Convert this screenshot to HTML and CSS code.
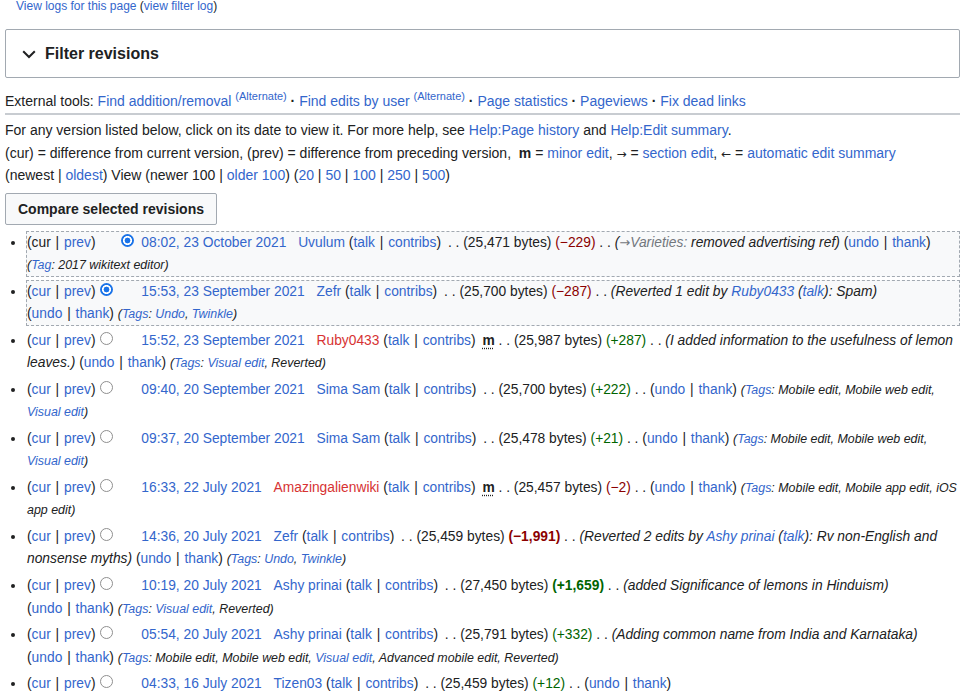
FILE: index.html
```html
<!DOCTYPE html>
<html lang="en">
<head>
<meta charset="utf-8">
<title>Lemon: Revision history</title>
<link rel="stylesheet" href="styles.css">
</head>
<body>
<div class="page">
  <div class="logs"><a href="#">View logs for this page</a> (<a href="#">view filter log</a>)</div>

  <div class="filter">
    <svg class="chev" width="14" height="9" viewBox="0 0 14 9"><polyline points="1.2,1.2 7,7 12.8,1.2" fill="none" stroke="#202122" stroke-width="2"/></svg>
    <span class="filter-title">Filter revisions</span>
  </div>

  <div class="ext">External tools: <a href="#">Find addition/removal</a> <sup><a href="#">(Alternate)</a></sup> <b class="dot">·</b> <a href="#">Find edits by user</a> <sup><a href="#">(Alternate)</a></sup> <b class="dot">·</b> <a href="#">Page statistics</a> <b class="dot">·</b> <a href="#">Pageviews</a> <b class="dot">·</b> <a href="#">Fix dead links</a></div>

  <div class="intro">
    <p>For any version listed below, click on its date to view it. For more help, see <a href="#">Help:Page history</a> and <a href="#">Help:Edit summary</a>.</p>
    <p>(cur) = difference from current version, (prev) = difference from preceding version, &nbsp;<abbr class="minor">m</abbr> = <a href="#">minor edit</a>, <span class="arrow">→</span> = <a href="#">section edit</a>, <span class="arrow">←</span> = <a href="#">automatic edit summary</a></p>
    <p>(newest | <a href="#">oldest</a>) View (newer 100 | <a href="#">older 100</a>) (<a href="#">20</a> | <a href="#">50</a> | <a href="#">100</a> | <a href="#">250</a> | <a href="#">500</a>)</p>
  </div>

  <button class="compare" type="button">Compare selected revisions</button>

  <ul class="history">
    <li class="selected"><span class="hl">(<span>cur</span><span><a href="#">prev</a></span>)</span><span class="radio off"></span><span class="radio checked"></span> <a class="date" href="#">08:02, 23 October 2021</a> <span class="user"><a href="#">Uvulum</a> <span class="hl">(<span><a href="#">talk</a></span><span><a href="#">contribs</a></span>)</span></span> . . <span class="bytes">(25,471 bytes)</span> <span class="neg">(−229)</span> . . <span class="comment">(<span class="auto"><a class="arrow" href="#">→</a>Varieties:</span> removed advertising ref)</span> <span class="hl">(<span><a href="#">undo</a></span><span><a href="#">thank</a></span>)</span> <span class="tags">(<a href="#">Tag</a>: 2017 wikitext editor)</span></li>

    <li class="selected"><span class="hl">(<span><a href="#">cur</a></span><span><a href="#">prev</a></span>)</span><span class="radio checked"></span><span class="radio off"></span> <a class="date" href="#">15:53, 23 September 2021</a> <span class="user"><a href="#">Zefr</a> <span class="hl">(<span><a href="#">talk</a></span><span><a href="#">contribs</a></span>)</span></span> . . <span class="bytes">(25,700 bytes)</span> <span class="neg">(−287)</span> . . <span class="comment">(Reverted 1 edit by <a href="#">Ruby0433</a> (<a href="#">talk</a>): Spam)</span> <span class="hl">(<span><a href="#">undo</a></span><span><a href="#">thank</a></span>)</span> <span class="tags">(<a href="#">Tags</a>: <a href="#">Undo</a>, <a href="#">Twinkle</a>)</span></li>

    <li><span class="hl">(<span><a href="#">cur</a></span><span><a href="#">prev</a></span>)</span><span class="radio"></span><span class="radio off"></span> <a class="date" href="#">15:52, 23 September 2021</a> <span class="user"><a class="new" href="#">Ruby0433</a> <span class="hl">(<span><a href="#">talk</a></span><span><a href="#">contribs</a></span>)</span></span> <abbr class="minor">m</abbr> . . <span class="bytes">(25,987 bytes)</span> <span class="pos">(+287)</span> . . <span class="comment">(I added information to the usefulness of lemon leaves.)</span> <span class="hl">(<span><a href="#">undo</a></span><span><a href="#">thank</a></span>)</span> <span class="tags">(<a href="#">Tags</a>: <a href="#">Visual edit</a>, Reverted)</span></li>

    <li><span class="hl">(<span><a href="#">cur</a></span><span><a href="#">prev</a></span>)</span><span class="radio"></span><span class="radio off"></span> <a class="date" href="#">09:40, 20 September 2021</a> <span class="user"><a href="#">Sima Sam</a> <span class="hl">(<span><a href="#">talk</a></span><span><a href="#">contribs</a></span>)</span></span> . . <span class="bytes">(25,700 bytes)</span> <span class="pos">(+222)</span> . . <span class="hl">(<span><a href="#">undo</a></span><span><a href="#">thank</a></span>)</span> <span class="tags">(<a href="#">Tags</a>: Mobile edit, Mobile web edit, <a href="#">Visual edit</a>)</span></li>

    <li><span class="hl">(<span><a href="#">cur</a></span><span><a href="#">prev</a></span>)</span><span class="radio"></span><span class="radio off"></span> <a class="date" href="#">09:37, 20 September 2021</a> <span class="user"><a href="#">Sima Sam</a> <span class="hl">(<span><a href="#">talk</a></span><span><a href="#">contribs</a></span>)</span></span> . . <span class="bytes">(25,478 bytes)</span> <span class="pos">(+21)</span> . . <span class="hl">(<span><a href="#">undo</a></span><span><a href="#">thank</a></span>)</span> <span class="tags">(<a href="#">Tags</a>: Mobile edit, Mobile web edit, <a href="#">Visual edit</a>)</span></li>

    <li><span class="hl">(<span><a href="#">cur</a></span><span><a href="#">prev</a></span>)</span><span class="radio"></span><span class="radio off"></span> <a class="date" href="#">16:33, 22 July 2021</a> <span class="user"><a class="new" href="#">Amazingalienwiki</a> <span class="hl">(<span><a href="#">talk</a></span><span><a href="#">contribs</a></span>)</span></span> <abbr class="minor">m</abbr> . . <span class="bytes">(25,457 bytes)</span> <span class="neg">(−2)</span> . . <span class="hl">(<span><a href="#">undo</a></span><span><a href="#">thank</a></span>)</span> <span class="tags">(<a href="#">Tags</a>: Mobile edit, Mobile app edit, iOS app edit)</span></li>

    <li><span class="hl">(<span><a href="#">cur</a></span><span><a href="#">prev</a></span>)</span><span class="radio"></span><span class="radio off"></span> <a class="date" href="#">14:36, 20 July 2021</a> <span class="user"><a href="#">Zefr</a> <span class="hl">(<span><a href="#">talk</a></span><span><a href="#">contribs</a></span>)</span></span> . . <span class="bytes">(25,459 bytes)</span> <strong class="neg">(−1,991)</strong> . . <span class="comment">(Reverted 2 edits by <a href="#">Ashy prinai</a> (<a href="#">talk</a>): Rv non-English and nonsense myths)</span> <span class="hl">(<span><a href="#">undo</a></span><span><a href="#">thank</a></span>)</span> <span class="tags">(<a href="#">Tags</a>: <a href="#">Undo</a>, <a href="#">Twinkle</a>)</span></li>

    <li><span class="hl">(<span><a href="#">cur</a></span><span><a href="#">prev</a></span>)</span><span class="radio"></span><span class="radio off"></span> <a class="date" href="#">10:19, 20 July 2021</a> <span class="user"><a href="#">Ashy prinai</a> <span class="hl">(<span><a href="#">talk</a></span><span><a href="#">contribs</a></span>)</span></span> . . <span class="bytes">(27,450 bytes)</span> <strong class="pos">(+1,659)</strong> . . <span class="comment">(added Significance of lemons in Hinduism)</span> <span class="hl">(<span><a href="#">undo</a></span><span><a href="#">thank</a></span>)</span> <span class="tags">(<a href="#">Tags</a>: <a href="#">Visual edit</a>, Reverted)</span></li>

    <li><span class="hl">(<span><a href="#">cur</a></span><span><a href="#">prev</a></span>)</span><span class="radio"></span><span class="radio off"></span> <a class="date" href="#">05:54, 20 July 2021</a> <span class="user"><a href="#">Ashy prinai</a> <span class="hl">(<span><a href="#">talk</a></span><span><a href="#">contribs</a></span>)</span></span> . . <span class="bytes">(25,791 bytes)</span> <span class="pos">(+332)</span> . . <span class="comment">(Adding common name from India and Karnataka)</span> <span class="hl">(<span><a href="#">undo</a></span><span><a href="#">thank</a></span>)</span> <span class="tags">(<a href="#">Tags</a>: Mobile edit, Mobile web edit, <a href="#">Visual edit</a>, Advanced mobile edit, Reverted)</span></li>

    <li><span class="hl">(<span><a href="#">cur</a></span><span><a href="#">prev</a></span>)</span><span class="radio"></span><span class="radio off"></span> <a class="date" href="#">04:33, 16 July 2021</a> <span class="user"><a href="#">Tizen03</a> <span class="hl">(<span><a href="#">talk</a></span><span><a href="#">contribs</a></span>)</span></span> . . <span class="bytes">(25,459 bytes)</span> <span class="pos">(+12)</span> . . <span class="hl">(<span><a href="#">undo</a></span><span><a href="#">thank</a></span>)</span></li>
  </ul>
</div>
</body>
</html>
```

FILE: styles.css
```css
html, body {
  margin: 0;
  padding: 0;
  background: #fff;
}

body {
  font-family: "Liberation Sans", Arial, Helvetica, sans-serif;
  font-size: 14px;
  line-height: 1.6;
  color: #202122;
  overflow: hidden;
}

a {
  color: #36c;
  text-decoration: none;
}

a.new {
  color: #d73333;
}

.page {
  width: 955px;
  padding-left: 5px;
}

.logs {
  font-size: 12px;
  line-height: 14px;
  margin: -1px 0 0 11px;
}

.filter {
  margin-top: 16px;
  height: 47px;
  border: 1px solid #a2a9b1;
  border-radius: 2px;
  display: flex;
  align-items: center;
  padding-left: 16px;
  gap: 9px;
}

.chev {
  display: block;
  margin-top: 1px;
}

.filter-title {
  font-size: 16px;
  font-weight: bold;
  line-height: 20px;
}

.ext {
  margin-top: 12px;
  padding-bottom: 1px;
  border-bottom: 2px solid #c8ccd1;
}

.ext sup {
  font-size: 11px;
  line-height: 1;
  vertical-align: 6px;
}

.dot {
  font-weight: bold;
}

.intro {
  margin-top: 4px;
}

.intro p {
  margin: 0;
}

.arrow {
  font-family: "DejaVu Sans", sans-serif;
  font-size: 12px;
  line-height: 1;
}

abbr.minor {
  font-weight: bold;
  text-decoration: underline dotted;
  text-underline-offset: 3px;
  border: 0;
}

.intro abbr.minor {
  text-decoration: none;
}

.compare {
  display: block;
  margin-top: 6px;
  height: 32px;
  padding: 0 12px;
  font-family: inherit;
  font-size: 14px;
  font-weight: bold;
  color: #202122;
  background: #f8f9fa;
  border: 1px solid #a2a9b1;
  border-radius: 2px;
}

.history {
  margin: 6px 0 0 21px;
  padding: 0;
  list-style: disc;
  font-size: 13.8px;
  line-height: 1.623;
}

.history li {
  border: 1px dashed transparent;
  margin-bottom: 2.3px;
}

.history li.selected {
  border-color: #a2a9b1;
  background: #f8f9fa;
}

.hl {
  white-space: nowrap;
}

.hl > span + span::before {
  content: "|";
  margin: 0 0.35em;
  color: #202122;
}

.radio {
  display: inline-block;
  width: 13px;
  height: 13px;
  margin: 0 3px 0 5px;
  box-sizing: border-box;
  border: 1px solid #8f8f8f;
  border-radius: 50%;
  background: #fff;
}

.radio.off {
  visibility: hidden;
}

.radio.checked {
  border: 0;
  background: radial-gradient(circle, #1a73e8 0 2.6px, #fff 3.2px 4.2px, #1a73e8 4.8px);
}

.user {
  margin-left: 8px;
  margin-right: 3px;
}

.neg {
  color: #8b0000;
}

.pos {
  color: #006400;
}

.comment {
  font-style: italic;
}

.auto {
  color: #72777d;
}

.auto a {
  color: #72777d;
}

.comment .arrow {
  font-size: 13px;
  font-style: normal;
}

.tags {
  font-style: italic;
  font-size: 90%;
}
```
